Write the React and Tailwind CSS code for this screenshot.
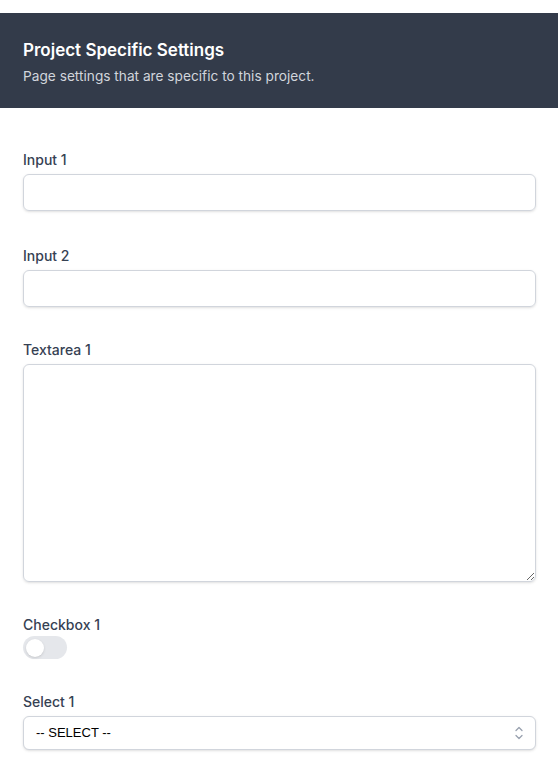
import React from 'react';

function Label({ children }) {
  return <label className="block text-sm font-medium leading-5 text-gray-700">{children}</label>;
}

export default function App() {
  return (
    <div className="min-h-screen bg-white pt-[13px] font-['Inter',sans-serif]">
      {/* Header */}
      <div className="bg-[#333b4a] pl-[23px] pr-[22px] pt-[25px] h-[95px]">
        <h2 className="text-[17px] font-semibold leading-6 text-white">Project Specific Settings</h2>
        <p className="mt-[4px] text-[13.7px] leading-5 text-gray-300">Page settings that are specific to this project.</p>
      </div>

      {/* Form */}
      <div className="pl-[23px] pr-[22px] pt-[42px] pb-8">
        <div>
          <Label>Input 1</Label>
          <input type="text" className="mt-1 block w-full h-[37px] rounded-md border border-gray-300 px-3 text-sm shadow-sm outline-none" />
        </div>
        <div className="mt-[35px]">
          <Label>Input 2</Label>
          <input type="text" className="mt-1 block w-full h-[37px] rounded-md border border-gray-300 px-3 text-sm shadow-sm outline-none" />
        </div>
        <div className="mt-[33px]">
          <Label>Textarea 1</Label>
          <textarea className="mt-1 block w-full h-[218px] rounded-md border border-gray-300 px-3 py-2 text-sm shadow-sm outline-none" />
        </div>
        <div className="mt-[33px]">
          <Label>Checkbox 1</Label>
          <button type="button" className="mt-[1px] flex items-center w-[44px] h-[23px] rounded-full bg-gray-200">
            <span className="ml-[3px] w-[18px] h-[18px] rounded-full bg-white shadow" />
          </button>
        </div>
        <div className="mt-[33px]">
          <Label>Select 1</Label>
          <div className="relative mt-1">
            <div className="flex items-center w-full h-[34px] rounded-md border border-gray-300 bg-white pl-[12px] pr-3 shadow-sm">
              <span className="text-[13px] text-black font-['Liberation_Sans',sans-serif]">-- SELECT --</span>
            </div>
            <svg className="absolute right-[12px] top-[9px] w-[10px] h-[16px] text-gray-400" viewBox="0 0 10 16" fill="none" stroke="currentColor" strokeWidth="1.3" strokeLinecap="round" strokeLinejoin="round">
              <path d="M2 5.5 L5 2.5 L8 5.5" />
              <path d="M2 10.5 L5 13.5 L8 10.5" />
            </svg>
          </div>
        </div>
      </div>
    </div>
  );
}
